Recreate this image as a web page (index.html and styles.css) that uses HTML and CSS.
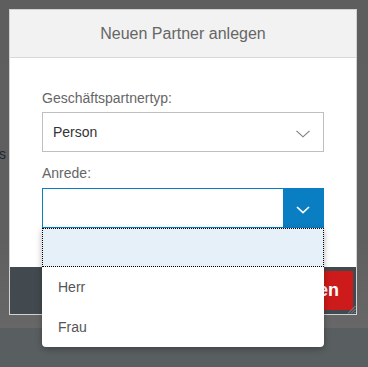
FILE: index.html
```html
<!DOCTYPE html>
<html lang="de">
<head>
<meta charset="utf-8">
<title>Neuen Partner anlegen</title>
<link rel="stylesheet" href="styles.css">
</head>
<body>
<div class="page">
  <div class="page-main">
    <div class="bg-label">Partners</div>
  </div>
  <div class="page-footer"></div>
</div>

<div class="dialog">
  <div class="dialog-header">Neuen Partner anlegen</div>
  <div class="dialog-content">
    <label class="field-label">Geschäftspartnertyp:</label>
    <div class="select">
      <span class="select-value">Person</span>
      <span class="select-arrow">
        <svg width="14" height="8" viewBox="0 0 14 8"><path d="M0.5 0.8 L7 6.8 L13.5 0.8" fill="none" stroke="#7a7a7a" stroke-width="1.1"/></svg>
      </span>
    </div>
    <label class="field-label field-label-2">Anrede:</label>
    <div class="select select-open">
      <span class="select-value"></span>
      <span class="select-arrow select-arrow-active">
        <svg width="14" height="8" viewBox="0 0 14 8"><path d="M1 1 L7 6.6 L13 1" fill="none" stroke="#ffffff" stroke-width="1.7"/></svg>
      </span>
    </div>
  </div>
  <div class="dialog-footer">
    <button class="btn-primary">Anlegen</button>
    <span class="grip">
      <svg width="9" height="9" viewBox="0 0 9 9"><path d="M8.5 1 L1 8.5 M8.5 4 L4 8.5 M8.5 7 L7 8.5" stroke="#8a8f92" stroke-width="1"/></svg>
    </span>
  </div>
</div>

<ul class="dropdown">
  <li class="dropdown-item is-focused"></li>
  <li class="dropdown-item">Herr</li>
  <li class="dropdown-item">Frau</li>
</ul>
</body>
</html>
```

FILE: styles.css
```css
html, body {
  margin: 0;
  padding: 0;
}
body {
  width: 368px;
  height: 367px;
  overflow: hidden;
  font-family: "Liberation Sans", Arial, sans-serif;
  background: #5f5f5f;
  position: relative;
}
.page {
  height: 367px;
  display: flex;
  flex-direction: column;
}
.page-main {
  flex: 1;
  background: linear-gradient(#5e5e5e 0, #5f5f5f 240px, #676767 328px);
  padding-top: 146px;
}
.bg-label {
  width: 6px;
  overflow: hidden;
  direction: rtl;
  white-space: nowrap;
  font-size: 14px;
  line-height: 16px;
  color: #1d2733;
}
.page-footer {
  height: 39px;
  background: #595e61;
}

.dialog {
  position: absolute;
  left: 9px;
  top: 9px;
  width: 348px;
  height: 306px;
  box-sizing: border-box;
  border: 1px solid #d2d2d2;
  background: #fff;
  display: flex;
  flex-direction: column;
}
.dialog-header {
  height: 47px;
  line-height: 47px;
  border-bottom: 1px solid #d9d9d9;
  background: #f2f2f2;
  text-align: center;
  font-size: 16px;
  color: #666;
}
.dialog-content {
  flex: 1;
  padding: 32px 32px 0;
  display: flex;
  flex-direction: column;
}
.field-label {
  display: block;
  font-size: 14px;
  line-height: 16px;
  color: #666;
  margin-bottom: 6px;
}
.field-label-2 {
  margin-top: 13px;
  margin-bottom: 7px;
}
.select {
  height: 40px;
  box-sizing: border-box;
  border: 1px solid #bfbfbf;
  display: flex;
  align-items: stretch;
  background: #fff;
}
.select-value {
  flex: 1;
  padding-left: 10px;
  font-size: 14px;
  line-height: 38px;
  color: #333;
}
.select-arrow {
  width: 40px;
  display: flex;
  align-items: center;
  justify-content: center;
  padding-top: 3px;
  box-sizing: border-box;
}
.select-open {
  border-color: #0a7ec3;
}
.select-arrow-active {
  background: #0a7ec3;
  padding-top: 4px;
}

.dialog-footer {
  height: 47px;
  background: #434a4f;
  display: flex;
  justify-content: flex-end;
  align-items: center;
  padding: 0 3px;
  position: relative;
}
.btn-primary {
  height: 39px;
  margin-top: -1px;
  padding: 0 14px 0 18px;
  border: none;
  background: #cd1a1a;
  color: #fff;
  font-family: "Liberation Sans", Arial, sans-serif;
  font-size: 18px;
  font-weight: bold;
}
.grip {
  position: absolute;
  right: 0;
  bottom: 0;
  width: 9px;
  height: 9px;
  display: flex;
}

.dropdown {
  position: absolute;
  left: 42px;
  top: 228px;
  width: 282px;
  margin: 0;
  padding: 0;
  list-style: none;
  background: #fff;
  border-radius: 0 0 4px 4px;
  box-shadow: 0 2px 6px rgba(0, 0, 0, 0.3);
}
.dropdown-item {
  height: 40px;
  line-height: 40px;
  padding-left: 16px;
  font-size: 14px;
  color: #555;
}
.dropdown-item.is-focused {
  height: 39px;
  background: #e5f0f9;
  outline: 1px dotted #000;
  outline-offset: -1px;
}
```
